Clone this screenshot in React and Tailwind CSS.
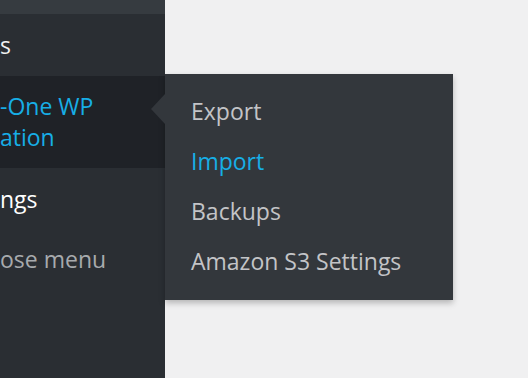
export default function App() {
  const font = { fontFamily: '"Open Sans", "Noto Sans", sans-serif' }
  return (
    <div className="relative w-[528px] h-[378px] overflow-hidden bg-[#f0f0f1] flex" style={font}>
      {/* admin sidebar */}
      <div className="w-[165px] h-full bg-[#2a2e33] flex flex-col overflow-hidden text-[23px] leading-[31px]">
        <div className="h-[14px] bg-[#363b40]" />
        <div className="h-[62px] flex items-center text-[#f0f0f1]">s</div>
        <div className="h-[92px] bg-[#1f2227] flex flex-col justify-center text-[#17aee6]">
          <span className="whitespace-nowrap">-One WP</span>
          <span className="whitespace-nowrap">ation</span>
        </div>
        <div className="h-[62px] flex items-center text-white">ngs</div>
        <div className="h-[58px] flex items-center text-[#a7aaad] whitespace-nowrap">ose menu</div>
      </div>

      {/* flyout submenu */}
      <div className="absolute left-[165px] top-[74px] w-[288px] h-[226px] bg-[#33373c] shadow-[0_3px_6px_rgba(0,0,0,0.25)] pl-[26px] pt-[12px] text-[23px]">
        <div className="absolute -left-[14px] top-[20px] w-0 h-0 border-y-[15px] border-y-transparent border-r-[14px] border-r-[#33373c]" />
        <ul className="flex flex-col">
          <li className="h-[50px] flex items-center text-[#c3c4c7]">Export</li>
          <li className="h-[50px] flex items-center text-[#17aee6]">Import</li>
          <li className="h-[50px] flex items-center text-[#c3c4c7]">Backups</li>
          <li className="h-[50px] flex items-center text-[#c3c4c7] whitespace-nowrap">Amazon S3 Settings</li>
        </ul>
      </div>
    </div>
  )
}
